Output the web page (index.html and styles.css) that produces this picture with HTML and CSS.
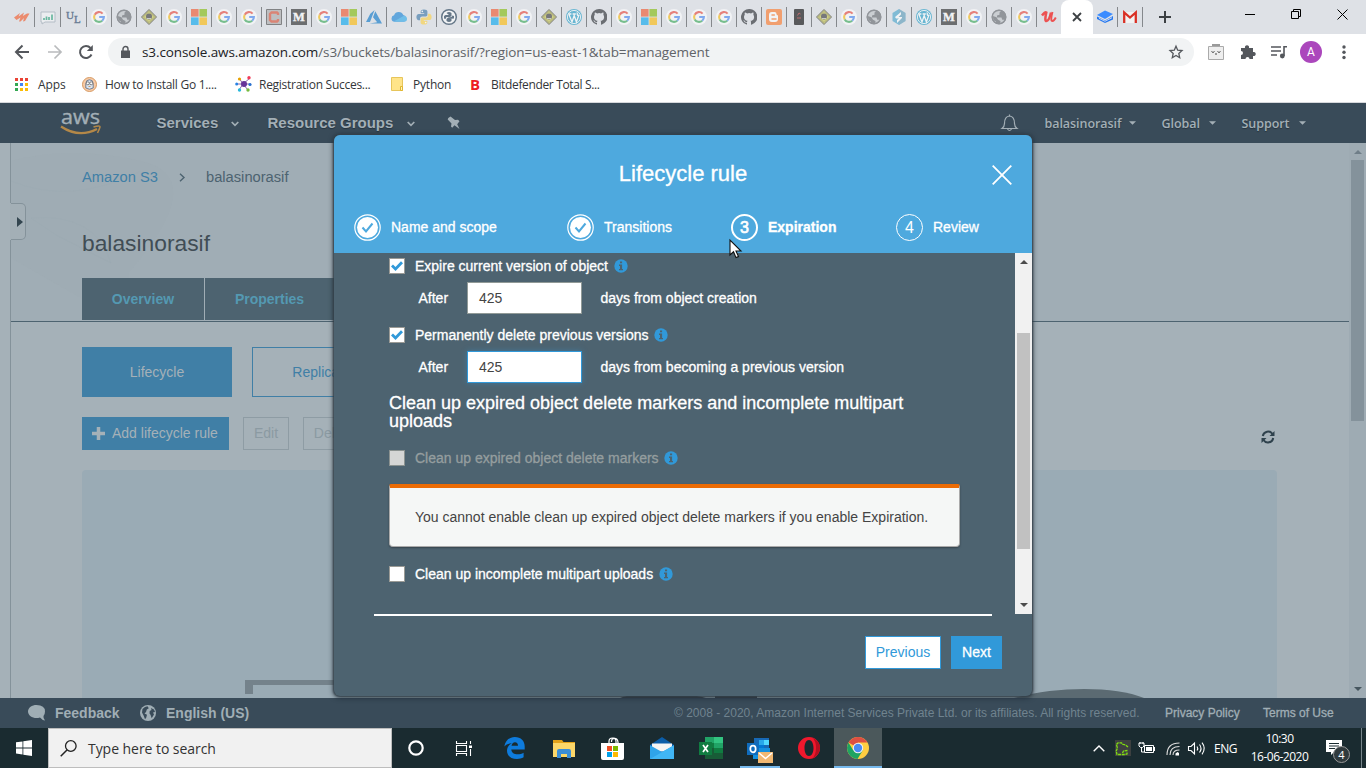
FILE: index.html
```html
<!DOCTYPE html>
<html lang="en">
<head>
<meta charset="utf-8">
<title>S3 Management Console</title>
<link rel="stylesheet" href="styles.css">
</head>
<body>
<svg class="defs" width="0" height="0">
  <symbol id="g" viewBox="0 0 16 16"><circle cx="8" cy="8" r="8" fill="#fff"/><g fill="none" stroke-width="2.1"><path d="M11.6 4.6A4.9 4.9 0 0 0 3.7 5.7" stroke="#ea4335"/><path d="M3.7 5.7a4.9 4.9 0 0 0 0 4.7" stroke="#fbbc05"/><path d="M3.7 10.4a4.9 4.9 0 0 0 7.5 1.3" stroke="#34a853"/><path d="M11.2 11.7A4.9 4.9 0 0 0 12.9 8H8.2" stroke="#4285f4"/></g></symbol>
  <symbol id="globe" viewBox="0 0 16 16"><circle cx="8" cy="8" r="7.3" fill="#5f6368"/><path d="M6.300 1.500Q9 1 10.300 2L8.500 3.500v2.300L6 6.500v2h4.500l.7 2.300h2.600q-1.300 3-4.600 3.700L9.500 12 7 10.800 5.500 8.300 1.800 7Q2 10 3 11.500L5 12.500v1.500Q1 12 .9 8 1 4.500 3.200 2.600z" fill="#dee1e6" opacity=".75"/><circle cx="8" cy="8" r="6.8" fill="none" stroke="#5f6368" stroke-width="1.400"/></symbol>
  <symbol id="diamond" viewBox="0 0 16 16"><path d="M8 .5 15.5 8 8 15.500.5 8z" fill="#c9c748" stroke="#333" stroke-width="1"/><path d="M8 2.400 13.600 8 8 13.600 2.400 8z" fill="none" stroke="#6c6b28" stroke-width=".7"/><circle cx="8" cy="7.400" r="3" fill="#333"/><path d="M6 9.500h4" stroke="#bbb"/></symbol>
  <symbol id="ms" viewBox="0 0 16 16"><path fill="#f25022" d="M0 0h7.6v7.6H0z"/><path fill="#7fba00" d="M8.4 0H16v7.6H8.4z"/><path fill="#00a4ef" d="M0 8.4h7.6V16H0z"/><path fill="#ffb900" d="M8.4 8.4H16V16H8.4z"/></symbol>
  <symbol id="medium" viewBox="0 0 16 16"><path d="M0 0h16v16H0z" fill="#222"/><text x="8" y="12.200" text-anchor="middle" class="serif" font-size="12.500" font-weight="700" fill="#fff" stroke="#fff" stroke-width=".4">M</text></symbol>
  <symbol id="wp" viewBox="0 0 16 16"><circle cx="8" cy="8" r="8" fill="#1e9bc6"/><circle cx="8" cy="8" r="6.600" fill="none" stroke="#fff" stroke-width=".9"/><path d="M2.800 5.100 6 13 8.200 6.600 10.400 13 13 5.800M2.400 5h3M6.600 5h3.200M11.200 3.500q-.5 2 1.400 4" fill="none" stroke="#fff" stroke-width="1.300"/></symbol>
  <symbol id="gh" viewBox="0 0 16 16"><path fill="#1f2328" d="M8 0a8 8 0 0 0-2.500 15.600c.4.1.5-.2.5-.4v-1.500c-2 .4-2.600-.9-2.800-1.100-.5-1-1-1.200-.6-1.300.8 0 1.300 1 1.600 1.200.6.8 1.500.6 1.900.4 0-.6.3-1 .5-1.100-1.800-.2-3.600-.9-3.600-4 0-.9.3-1.600.8-2.100-.1-.2-.4-1 .1-2.100 0 0 .7-.2 2.200.8a7.500 7.500 0 0 1 4 0c1.500-1 2.200-.8 2.200-.8.4 1.100.1 1.900 0 2.100.5.6.8 1.300.8 2.200 0 3-1.900 3.700-3.600 3.900.3.200.5.7.5 1.500v2c0 .2.1.5.5.4A8 8 0 0 0 8 0z"/></symbol>
  <symbol id="snake" viewBox="0 0 16 16"><path d="M8 .4C5.200.4 4.700 1.500 4.700 2.600v1.700h3.500v.6H2.800C1.200 4.900.4 6.200.4 8.100s1 3.200 2.200 3.200h1.500V9.500c0-1.100.9-2 2-2h3.700c1 0 1.600-.8 1.600-1.700V2.600C11.400 1.200 10.200.4 8 .4z" fill="#3573a5"/><path d="M8 15.600c2.800 0 3.300-1.100 3.300-2.200v-1.700H7.800v-.6h5.400c1.600 0 2.400-1.300 2.400-3.200s-1-3.200-2.200-3.200h-1.500v1.800c0 1.100-.9 2-2 2H6.200c-1 0-1.600.8-1.600 1.700v3.200c0 1.400 1.200 2.200 3.400 2.200z" fill="#ffd23f"/><circle cx="6.300" cy="2.400" r=".8" fill="#fff"/><circle cx="9.700" cy="13.600" r=".8" fill="#fff"/></symbol>
  <symbol id="info" viewBox="0 0 14 14"><circle cx="7" cy="7" r="6.700" fill="#3199d9"/><path d="M6 2.500h2.100v1.800H6zM5 5.500h3.100v4.400H9v1.400H5V9.900h1V6.900H5z" fill="#4d6370"/></symbol>
  <symbol id="chev" viewBox="0 0 8 6"><path d="M.7 1 4 4.300 7.300 1" fill="none" stroke="currentColor" stroke-width="1.700"/></symbol>
  <symbol id="up" viewBox="0 0 8 4"><path d="M0 4 4 0l4 4z" fill="currentColor"/></symbol>
  <symbol id="down" viewBox="0 0 8 4"><path d="M0 0h8L4 4z" fill="currentColor"/></symbol>
</svg>

<div class="tabs">
  <i class="tab t25"><svg viewBox="0 0 16 16"><path d="m0 8.500 6-4.500-1.500 3.500L10 3.500 8.800 7 13 4.500h2.500L11 12l-2 .5 1-3.500-3.500 3.500H5l1.500-4-4 2.500z" fill="#f4511e"/></svg></i>
  <i class="tab t26"><svg viewBox="0 0 16 16"><path d="M1 3h14v10H5l-3 2v-2H1z" fill="#f4f6f7" stroke="#9aa7b3"/><path d="M4 9v2M6.500 7.500V11M9 8v3M12 5.500V11" stroke="#1a9c70" stroke-width="1.700"/></svg></i>
  <i class="tab t26"><svg viewBox="0 0 16 16"><text x="0" y="10" class="serif" font-size="11" fill="#18385d" stroke="#18385d" stroke-width=".4">U</text><text x="8" y="13.500" class="serif" font-size="11" fill="#18385d" stroke="#18385d" stroke-width=".4">L</text></svg></i>
  <i class="tab"><svg><use href="#g"/></svg></i>
  <i class="tab"><svg><use href="#globe"/></svg></i>
  <i class="tab"><svg><use href="#diamond"/></svg></i>
  <i class="tab"><svg><use href="#g"/></svg></i>
  <i class="tab"><svg><use href="#ms"/></svg></i>
  <i class="tab"><svg><use href="#g"/></svg></i>
  <i class="tab"><svg><use href="#g"/></svg></i>
  <i class="tab"><svg viewBox="0 0 16 16"><path d="M.5.500h15v15H.5z" fill="#aaa" stroke="#444"/><path d="M12 6V4.500L11 3.500H5.500L4 5v6l1.500 1.500H11l1-1V10" fill="none" stroke="#d9482b" stroke-width="2.400"/></svg></i>
  <i class="tab"><svg><use href="#medium"/></svg></i>
  <i class="tab"><svg><use href="#g"/></svg></i>
  <i class="tab"><svg><use href="#ms"/></svg></i>
  <i class="tab"><svg viewBox="0 0 16 16"><path d="M8.600 1 4.300 4.700 0 13h4zM9.300 2.200 7 8.300l4.200 5L3.500 14.600H16z" fill="#0072c6"/></svg></i>
  <i class="tab"><svg viewBox="0 0 16 16"><path d="M3.500 12.800a3.300 3.300 0 0 1-.4-6.500A5 5 0 0 1 12.300 6a3.500 3.500 0 0 1 .4 6.800z" fill="#0f7fd6"/><path d="M2.700 12.600 13 6.800q3 .6 3 3.200t-3 2.800z" fill="#28a8ea"/></svg></i>
  <i class="tab"><svg><use href="#snake"/></svg></i>
  <i class="tab"><svg viewBox="0 0 16 16"><circle cx="8" cy="8" r="7.300" fill="#fff" stroke="#16324b" stroke-width="1.500"/><path d="M5.500 4q2.500-2 5 0v3L9 8H5.500L4.500 10 3 9.500V7l1.500-1H8zM5.500 12q2.500 2 5 0v-2H8l5-.5V7l-1.500-.5L10.500 8 7 8.600 5.500 10z" fill="#16324b"/></svg></i>
  <i class="tab"><svg><use href="#g"/></svg></i>
  <i class="tab"><svg><use href="#ms"/></svg></i>
  <i class="tab"><svg><use href="#g"/></svg></i>
  <i class="tab"><svg><use href="#diamond"/></svg></i>
  <i class="tab"><svg><use href="#wp"/></svg></i>
  <i class="tab"><svg><use href="#gh"/></svg></i>
  <i class="tab"><svg><use href="#g"/></svg></i>
  <i class="tab"><svg><use href="#ms"/></svg></i>
  <i class="tab"><svg><use href="#g"/></svg></i>
  <i class="tab"><svg><use href="#g"/></svg></i>
  <i class="tab"><svg><use href="#g"/></svg></i>
  <i class="tab"><svg><use href="#gh"/></svg></i>
  <i class="tab"><svg viewBox="0 0 16 16"><rect width="16" height="16" rx="2" fill="#ff7421"/><path d="M5.800 3h2.700q2 0 2.200 2.400l.3.800h1V10q0 3-3 3H5.800Q3 13 3 10V6q0-3 2.800-3z" fill="#fff"/><path d="M6 6h2.300M6 10h4" stroke="#ff7421" stroke-width="1.500" stroke-linecap="round"/></svg></i>
  <i class="tab"><svg viewBox="0 0 16 16"><rect x="3" width="10" height="16" rx="1" fill="#000"/><path d="M6.500 6.500 8 4l1.500 1M6 9h4" stroke="#a22" fill="none"/></svg></i>
  <i class="tab"><svg><use href="#diamond"/></svg></i>
  <i class="tab"><svg><use href="#g"/></svg></i>
  <i class="tab"><svg><use href="#globe"/></svg></i>
  <i class="tab"><svg viewBox="0 0 16 16"><path d="m8 0 6.500 4v8L8 16l-6.500-4V4z" fill="#42a2cb"/><path d="m8 0 6.500 4v8L8 16z" fill="#6f93a8" opacity=".5"/><path d="m4 8 6-5v2.500L7.500 8H11v1l-5 5v-3l2-1.500H5z" fill="#fff"/></svg></i>
  <i class="tab"><svg><use href="#wp"/></svg></i>
  <i class="tab"><svg><use href="#medium"/></svg></i>
  <i class="tab"><svg><use href="#g"/></svg></i>
  <i class="tab"><svg><use href="#globe"/></svg></i>
  <i class="tab"><svg><use href="#g"/></svg></i>
  <i class="tab last bright"><svg viewBox="0 0 16 16"><path d="M1 6.500q3-4 4.300-3-2 8.500.2 8.500Q8 12 10 3.500" fill="none" stroke="#ec5252" stroke-width="2.500"/><path d="M11.500 3Q9 12 11.500 12q1.500 0 3.300-3.500" fill="none" stroke="#ec5252" stroke-width="1.900"/></svg></i>
  <i class="tab-active"><svg width="10" height="10" viewBox="0 0 10 10"><path d="m1 1 8 8M9 1 1 9" stroke="#3c4043" stroke-width="1.800"/></svg></i>
  <i class="tab bright"><svg viewBox="0 0 16 16"><path d="m0 6 8-4.500L16 5l-8 5z" fill="#3b8cff"/><path d="m0 7.500 8 4L16 7v3.500L8 14l-8-4z" fill="#2879ef"/><path d="m2 9.300 6 3 7-3.600" fill="none" stroke="#dfe9f7" stroke-width=".8"/></svg></i>
  <i class="tab bright"><svg viewBox="0 0 16 16"><path d="M1 3h14v11H1z" fill="#f2f2f2"/><path d="M2.200 14V3.500L8 8.500l5.800-5V14" fill="none" stroke="#d93025" stroke-width="2.300"/></svg></i>
  <svg class="newtab" width="12" height="12" viewBox="0 0 12 12"><path d="M6 0v12M0 6h12" stroke="#3c4043" stroke-width="2"/></svg>
  <span class="wincontrols">
    <svg width="10" height="10"><path d="M0 5.500h10" stroke="#000"/></svg>
    <svg width="10" height="10"><path d="M.5 2.500h7v7h-7zM2.500 2.500v-2h7v7h-2" fill="none" stroke="#000"/></svg>
    <svg width="11" height="11"><path d="m.5.500 10 10m0-10-10 10" stroke="#000"/></svg>
  </span>
</div>

<div class="toolbar">
  <svg class="back" width="16" height="16" viewBox="0 0 16 16"><path d="M15 8H2M8.500 1.500 2 8l6.500 6.500" fill="none" stroke="#54575c" stroke-width="2"/></svg>
  <svg class="fwd" width="16" height="16" viewBox="0 0 16 16"><path d="M1 8h13M7.500 1.500 14 8l-6.500 6.500" fill="none" stroke="#b9bbbd" stroke-width="1.700"/></svg>
  <svg class="reload" width="16" height="16" viewBox="0 0 16 16"><path d="M13.500 10.500A6 6 0 1 1 12.500 4" fill="none" stroke="#54575c" stroke-width="2"/><path d="M14.800 1v6h-6z" fill="#54575c"/></svg>
  <div class="omnibox">
    <svg width="9" height="12" viewBox="0 0 9 12"><path d="M0 4.500h9V12H0z" fill="#54575c"/><path d="M2 5V3a2.500 2.500 0 0 1 5 0v2" fill="none" stroke="#54575c" stroke-width="1.400"/></svg>
    <span class="url">s3.console.aws.amazon.com<span>/s3/buckets/balasinorasif/?region=us-east-1&amp;tab=management</span></span>
    <svg class="star" width="14" height="14" viewBox="0 0 14 14"><path d="m7 1.200 1.700 4 4.300.4-3.200 2.900.9 4.200L7 10.500l-3.700 2.200.9-4.200L1 5.600l4.300-.4z" fill="none" stroke="#54575c" stroke-width="1.300"/></svg>
  </div>
  <svg class="ext" width="16" height="16" viewBox="0 0 16 16"><path d="M4 0h8v2H4z" fill="#9a9a9a"/><path d="M.5 2.500h15v13H.5z" fill="#eee" stroke="#aaa"/><path d="M3.500 7.500 5 8.500l1.500-1M9.500 7.500l1.500 1 1.500-1M7 10h2" fill="none" stroke="#444"/></svg>
  <svg class="puzzle" width="16" height="16" viewBox="0 0 16 16"><path d="M1 4h4a2.100 2.100 0 1 1 4 0h4v4a2.100 2.100 0 1 1 0 4v3H9.500a2 2 0 0 0-4 0H1v-4a2 2 0 0 0 0-4z" fill="#54575c"/></svg>
  <svg class="queue" width="16" height="14" viewBox="0 0 16 14"><path d="M0 2h10M0 6h10M0 10h6" stroke="#54575c" stroke-width="1.600"/><path d="M13 11V1.800h3" fill="none" stroke="#54575c" stroke-width="1.600"/><circle cx="11.300" cy="11" r="2.400" fill="#54575c"/></svg>
  <span class="avatar">A</span>
  <svg class="kebab" width="4" height="16"><circle cx="2" cy="3" r="1.700"/><circle cx="2" cy="8.300" r="1.700"/><circle cx="2" cy="13.500" r="1.700"/></svg>
</div>

<div class="bookmarks">
  <span class="bm b1"><svg width="13" height="13" viewBox="0 0 13 13"><path fill="#ea4335" d="M0 0h3v3H0zM5 0h3v3H5zM10 0h3v3h-3z"/><path fill="#34a853" d="M0 5h3v3H0zM0 10h3v3H0z"/><path fill="#4285f4" d="M5 5h3v3H5z"/><path fill="#fbbc05" d="M10 5h3v3h-3zM5 10h3v3H5zM10 10h3v3h-3z"/></svg>Apps</span>
  <span class="bm b2"><svg width="15" height="15" viewBox="0 0 15 15"><circle cx="7.500" cy="7.500" r="7" fill="#f8cba6" stroke="#d79a63"/><path d="M3.800 11V6.500q0-3.700 3.700-3.700t3.700 3.700V11q-3.700 2.500-7.400 0z" fill="#dbe5f0" stroke="#5b6880" stroke-width=".8"/><circle cx="5.800" cy="6.300" r="1.500" fill="#fff" stroke="#555" stroke-width=".7"/><circle cx="9.200" cy="6.300" r="1.500" fill="#fff" stroke="#555" stroke-width=".7"/><path d="M6.500 9.500h2" stroke="#c96"/></svg>How to Install Go 1....</span>
  <span class="bm b3"><svg width="17" height="16" viewBox="0 0 17 16"><path d="m8 8-4-6M8 8l7-6M8 8H1M8 8h8M8 8l-4 6M8 8l5 6" stroke="#86a"/><circle cx="9" cy="8" r="3" fill="#663399"/><circle cx="4.500" cy="3" r="1.600" fill="#e8a200"/><circle cx="14" cy="1.700" r="1.700" fill="#f23b57"/><circle cx="1.700" cy="8" r="1.500" fill="#2782e3"/><circle cx="15" cy="8.500" r="1.600" fill="#2a73d1"/><circle cx="4.500" cy="14" r="1.700" fill="#28b8db"/><circle cx="13" cy="14" r="1.700" fill="#75ba3e"/></svg>Registration Succes...</span>
  <span class="bm b4"><svg width="12" height="14" viewBox="0 0 12 14"><path d="M.5.500h11v13H.5z" fill="#ffe489" stroke="#e7c55b"/><path d="M9.500 9.500h2v4h-2z" fill="#fff2bd" stroke="#e0b62f"/></svg>Python</span>
  <span class="bm b5"><b>B</b>Bitdefender Total S...</span>
</div>

<div class="console">
  <div class="nav">
    <svg class="aws" width="42" height="28" viewBox="0 0 42 28"><text x="1" y="15" textLength="39" lengthAdjust="spacingAndGlyphs" font-size="20" fill="#a3afb6" class="awsword">aws</text><path d="M1 17.500q18 12 36 2.500" fill="none" stroke="#b48848" stroke-width="2.300"/><path d="M33.500 18q7-2 6.500 0t-2.500 6" fill="none" stroke="#b48848" stroke-width="1.500"/></svg>
    <span class="n1">Services</span><svg class="cv c1" width="8" height="6"><use href="#chev"/></svg>
    <span class="n2">Resource Groups</span><svg class="cv c2" width="8" height="6"><use href="#chev"/></svg>
    <svg class="pin" width="14" height="14" viewBox="0 0 14 14"><path d="M3.500.5 8 4l3-.3 1.500 1.500-2.300 3L12.500 13l-5-3.700-2.300 2.500L4 10.500l.5-3L.7 3.500l.6-1.500z" fill="#a3afb6"/></svg>
    <svg class="bell" width="17" height="18" viewBox="0 0 17 18"><path d="M1 14.500q2.500-2 2.500-5 0-7 5-7.500 5 .5 5 7.500 0 3 2.500 5zM8.500 2V.5M6.500 15q2 3 4 0" fill="none" stroke="#a3afb6" stroke-width="1.200"/></svg>
    <span class="acct a1">balasinorasif</span><svg class="dn" width="7" height="4"><use href="#down"/></svg>
    <span class="acct a2">Global</span><svg class="dn" width="7" height="4"><use href="#down"/></svg>
    <span class="acct a3">Support</span><svg class="dn" width="7" height="4"><use href="#down"/></svg>
  </div>

  <div class="page">
    <div class="rail"><span class="handle"><svg width="6" height="10"><path d="M0 0 6 5 0 10z" fill="#33454f"/></svg></span></div>
    <div class="main">
      <div class="top">
        <svg class="ghost" width="260" height="178" viewBox="0 0 260 178"><path d="M0 18Q60 2 130 18T118 130L110 178 0 115z" fill="#9caab1" opacity=".15"/><path d="M0 38q60 25 130-10M20 75q65-5 80 45L45 92z" fill="none" stroke="#97a6ae" opacity=".25"/></svg>
        <div class="crumbs"><a>Amazon S3</a><svg width="6" height="9"><path d="m1 .8 4 3.700-4 3.700" fill="none" stroke="#4d6370" stroke-width="1.400"/></svg><span>balasinorasif</span></div>
        <h1>balasinorasif</h1>
        <div class="maintabs"><span class="mt1">Overview</span><span class="mt2">Properties</span></div>
      </div>
      <div class="subtabs"><span class="st on">Lifecycle</span><span class="st">Replication</span></div>
      <div class="actions">
        <span class="add"><svg width="13" height="13"><path d="M6.500 0v13M0 6.500h13" stroke="#a5b1b8" stroke-width="3.500"/></svg>Add lifecycle rule</span>
        <span class="ghostbtn">Edit</span><span class="ghostbtn">Delete</span>
        <svg class="refresh" width="14" height="14" viewBox="0 0 14 14"><path d="M1.800 6A5.300 5.300 0 0 1 11.500 4M12.200 8A5.300 5.300 0 0 1 2.500 10" fill="none" stroke="#2f424d" stroke-width="2"/><path d="M13.500 1v5h-5zM.5 13V8h5z" fill="#2f424d"/></svg>
      </div>
      <div class="panel">
        <span class="frame"></span>
        <svg class="hump" width="860" height="9"><path d="M275 9q6-3 20-3h38q20 0 28 3zM370 7h42v2h-42z" fill="#3a444a"/><path d="M669 9C712-3 770-3 799 9z" fill="#5b6a72"/></svg>
      </div>
    </div>
    <div class="pagescroll"><svg width="8" height="4"><use href="#up"/></svg><i></i><svg class="end" width="8" height="4"><use href="#down"/></svg></div>
  </div>

  <div class="foot">
    <svg class="bubble" width="18" height="16" viewBox="0 0 18 16"><path d="M8.500 0C4 0 0 2.700 0 6.500S4 13 8.500 13q1.500 0 3.500-.5 2 2.500 5 3-2-2-1.500-4.500Q17 9 17 6.500 17 0 8.500 0z" fill="#a0aeb5"/></svg>
    <b class="fb">Feedback</b>
    <svg class="world" width="16" height="16" viewBox="0 0 16 16"><circle cx="8" cy="8" r="8" fill="#a0aeb5"/><path d="M2.500 4q2.500-2.800 5-2.800l1.300 2-2 1.300L6 7 4.500 8.500 7 9.800l-.8 3-1.200 1.500-1.300-3.500L2 7.500zM11 3l3 1.500 1 2.500-2 .5 1 2-2.300 3.700-1.200-3.500L9.500 8.500 9.700 6l1.800-1z" fill="#394b59"/></svg>
    <b class="lang">English (US)</b>
    <span class="copy">© 2008 - 2020, Amazon Internet Services Private Ltd. or its affiliates. All rights reserved.</span>
    <span class="pp">Privacy Policy</span><span class="tu">Terms of Use</span>
  </div>

  <div class="modal">
    <div class="mhead">
      <div class="mtitle">Lifecycle rule<svg class="close" width="20" height="20"><path d="m.7.700 18.600 18.600m0-18.600L.7 19.300" stroke="#fff" stroke-width="1.800"/></svg></div>
      <div class="steps">
        <span class="step s1"><i><svg width="27" height="27"><circle cx="13.500" cy="13.500" r="12.700" fill="none" stroke="#fff" stroke-width="1.200"/><circle cx="13.500" cy="13.500" r="10.500" fill="#fff"/><path d="m8.500 13.500 3.500 4 6.500-8" fill="none" stroke="#4ea9de" stroke-width="2"/></svg></i>Name and scope</span>
        <span class="step s2"><i><svg width="27" height="27"><circle cx="13.500" cy="13.500" r="12.700" fill="none" stroke="#fff" stroke-width="1.200"/><circle cx="13.500" cy="13.500" r="10.500" fill="#fff"/><path d="m8.500 13.500 3.500 4 6.500-8" fill="none" stroke="#4ea9de" stroke-width="2"/></svg></i>Transitions</span>
        <span class="step s3"><i class="num">3</i>Expiration</span>
        <span class="step s4"><i class="num">4</i>Review</span>
      </div>
    </div>
    <div class="mbody">
      <div class="form">
        <div class="check r1"><i><svg width="12" height="10"><path d="m1 4.500 3.500 3.500L11 1.300" fill="none" stroke="#3199d9" stroke-width="2.800"/></svg></i>Expire current version of object<svg class="info"><use href="#info"/></svg></div>
        <div class="after"><span>After</span><b>425</b>days from object creation</div>
        <div class="check r2"><i><svg width="12" height="10"><path d="m1 4.500 3.500 3.500L11 1.300" fill="none" stroke="#3199d9" stroke-width="2.800"/></svg></i>Permanently delete previous versions<svg class="info"><use href="#info"/></svg></div>
        <div class="after focus"><span>After</span><b>425</b>days from becoming a previous version</div>
        <h2>Clean up expired object delete markers and incomplete multipart uploads</h2>
        <div class="check off"><i></i>Clean up expired object delete markers<svg class="info"><use href="#info"/></svg></div>
        <div class="alert">You cannot enable clean up expired object delete markers if you enable Expiration.</div>
        <div class="check"><i></i>Clean up incomplete multipart uploads<svg class="info"><use href="#info"/></svg></div>
      </div>
      <div class="mscroll"><svg width="8" height="4"><use href="#up"/></svg><i></i><svg class="end" width="8" height="4"><use href="#down"/></svg></div>
    </div>
    <div class="mfoot"><span class="prev">Previous</span><span class="next">Next</span></div>
  </div>
  <svg class="cursor" width="13" height="20" viewBox="0 0 13 20"><path d="M1 1v15l3.500-3.200L7 18.600l2.500-1-2.500-5.600h5z" fill="#fff" stroke="#111" stroke-width="1.100"/></svg>
</div>

<div class="taskbar">
  <span class="start"><svg width="16" height="16" viewBox="0 0 16 16"><path d="m0 2.300 6.500-.9v6.100H0zM7.300 1.300 16 0v7.500H7.300zM0 8.400h6.500v6.100L0 13.600zM7.300 8.400H16V16l-8.700-1.300z" fill="#fff"/></svg></span>
  <span class="search"><svg width="17" height="17" viewBox="0 0 17 17"><circle cx="10.800" cy="6" r="5.300" fill="none" stroke="#222" stroke-width="1.300"/><path d="M7 10 .7 16.300" stroke="#222" stroke-width="1.500"/></svg>Type here to search</span>
  <span class="cell"><svg width="16" height="16"><circle cx="8" cy="8" r="6.700" fill="none" stroke="#fff" stroke-width="2.200"/></svg></span>
  <span class="cell tv"><svg width="16" height="15" viewBox="0 0 16 15"><path d="M.5 0v2.500h10V0M.5 15v-2.500h10V15M.5 4.500h10v6H.5zM14.500 0v3M14.500 8v7" fill="none" stroke="#fff" stroke-width="1.100"/><path d="M13 4.500h3v2.500h-3z" fill="#fff"/></svg></span>
  <span class="app"><svg width="21" height="22" viewBox="0 0 21 22"><path d="M.3 9.500C1.500 3.500 5.500 0 10.800 0 17 0 20.700 4 20.700 9.500v3H7.300c.3 3.500 3 4.800 6.300 4.800 2.300 0 4.300-.6 6-1.600v4.600C17.700 21.500 15.500 22 13 22 7 22 3 18.700 3 13.800c0-3.300 1.700-6 4.800-7.600C4.500 6.300 2 7.500.3 9.500zM7.500 8.800H14C14 6.500 12.900 5.200 11 5.200S8 6.500 7.500 8.800z" fill="#0e7bdc" fill-rule="evenodd"/></svg></span>
  <span class="app"><svg width="22" height="19" viewBox="0 0 22 19"><path d="M0 1h9l1.500 2H22v15H0z" fill="#e3a21a"/><path d="M0 4h22v14H0z" fill="#fcd769"/><path d="M4 19v-7q0-2 2-2h10q2 0 2 2v7h-4v-4H8v4z" fill="#3b8ed6"/></svg></span>
  <span class="app"><svg width="23" height="23" viewBox="0 0 23 23"><path d="M8 7V4.500q0-3.500 3.500-3.500T15 4.500V7M10.500 5q0-3.700 3-3.700T17 5v2" fill="none" stroke="#fff" stroke-width="1.200"/><path d="M0 6h23v15q0 2-2 2H2q-2 0-2-2z" fill="#fff"/><path d="M6 9h5v5H6z" fill="#f04e23"/><path d="M12 9h5v5h-5z" fill="#7cb900"/><path d="M6 15h5v5H6z" fill="#01a0e9"/><path d="M12 15h5v5h-5z" fill="#fdb900"/></svg></span>
  <span class="app"><svg width="24" height="22" viewBox="0 0 24 22"><path d="M0 8 12 0l12 8v14H0z" fill="#0b5da8"/><path d="M2 6.500h20v8H2z" fill="#f4f4f4"/><path d="M0 8.200 12 15l12-6.800V22H0z" fill="#2fa4ea"/><path d="M0 22 24 8.200V22z" fill="#41b6f5"/></svg></span>
  <span class="app"><svg width="24" height="22" viewBox="0 0 24 22"><path d="M6 0h18v22H6z" fill="#21a366"/><path d="M15 0h9v6h-9z" fill="#33c481"/><path d="M6 6h9v5H6z" fill="#107c41"/><path d="M15 11h9v5h-9z" fill="#107c41"/><path d="M6 11h9v11H6z" fill="#185c37"/><path d="M15 16h9v6h-9z" fill="#185c37"/><rect y="5" width="13" height="13" fill="#107c41"/><path d="m4 8 5 7M9 8l-5 7" stroke="#fff" stroke-width="1.700"/></svg></span>
  <span class="app open"><svg width="26" height="25" viewBox="0 0 26 25"><path d="M7 0h15v14H7z" fill="#1769b5"/><path d="M12 2h5v5h-5z" fill="#28a8ea"/><path d="M17 2h5v5h-5z" fill="#50d9ff"/><path d="M12 7h5v5h-5z" fill="#0078d4"/><path d="M6 10h17v11H6z" fill="#1490df"/><rect y="5" width="12" height="12" fill="#0f6cbd"/><ellipse cx="6" cy="11" rx="2.700" ry="3.300" fill="none" stroke="#fff" stroke-width="1.700"/><path d="M11 14h15v11H11z" fill="#f0b873"/><path d="m12 15 6.500 5.500L25 15" fill="none" stroke="#fff" stroke-width="1.500"/></svg></span>
  <span class="app"><svg width="22" height="22" viewBox="0 0 22 22"><path fill-rule="evenodd" d="M11 0a11 11 0 1 1 0 22 11 11 0 0 1 0-22zm0 3C8.300 3 6.500 6.300 6.500 11s1.800 8 4.500 8 4.500-3.300 4.500-8S13.700 3 11 3z" fill="#f0182d"/><path d="M14 .5Q22 4 22 11t-8 10.500q4-3 4-10.500T14 .5z" fill="#b50f20"/></svg></span>
  <span class="app current"><svg width="22" height="22" viewBox="0 0 22 22"><circle cx="11" cy="11" r="11" fill="#ffcd41"/><path d="M11 11 1.500 5.500A11 11 0 0 1 20.500 5.500H11z" fill="#dd4f43"/><path d="M1.500 5.500A11 11 0 0 0 10.500 22L15.700 13.500 11 11 6 13z" fill="#1ea362"/><circle cx="11" cy="11" r="5.200" fill="#f3f3f3"/><circle cx="11" cy="11" r="4.200" fill="#4a8af4"/></svg></span>
  <div class="tray">
    <svg width="12" height="7"><path d="m.7 6.300 5.300-5.300 5.300 5.300" fill="none" stroke="#fff" stroke-width="1.400"/></svg>
    <svg class="nv" width="16" height="16"><path d="M0 0h16v16H0z" fill="#3d4040"/><path d="M1.500 4.500 3 2.800h3.500l1 1.500 3 .7 2.500 2M1.500 5l1 3-1.300 3 .8 3.500h8l2-.5v-1.500M12.500 10.500 8.500 11l-1 2" fill="none" stroke="#80e010" stroke-width="1.300" stroke-dasharray="3 .7"/></svg>
    <svg class="bat" width="16" height="12" viewBox="0 0 16 12"><path d="M0 1h5v3l-1.500 1.500h-2L0 4zM1 0v2M4 0v2M2.500 5v5H5" fill="none" stroke="#fff"/><path d="M5.500 3.500h9v7h-9z" fill="none" stroke="#fff"/><path d="M7 5h6v4H7zM15 5h1v4h-1z" fill="#fff"/></svg>
    <svg class="wifi" width="14" height="14" viewBox="0 0 14 14"><path d="M1 13Q1 1 13.500 1M4 13Q4 4.500 13.500 4.500M7 13Q7 8 13.500 8" fill="none" stroke="#ddd" stroke-width="1.100"/><path d="M9.500 13.500v-2l2-1.500 1.500 1v2.500z" fill="#fff"/></svg>
    <svg class="vol" width="17" height="13" viewBox="0 0 17 13"><path d="M.5 4.500H3L6.500 1v11L3 8.500H.5zM9 4.500q1.500 2 0 4M11.500 2.500q3 4 0 8M14 .7q4.500 5.800 0 11.600" fill="none" stroke="#fff" stroke-width="1.100"/></svg>
    <span class="eng">ENG</span>
    <span class="clock"><span>10:30</span><span class="date">16-06-2020</span></span>
    <span class="notif"><svg width="16" height="15"><path d="M0 0h16v12H8l-3 3v-3H0z" fill="#fff"/><path d="M3 3.500h10M3 6h10M3 8.500h6" stroke="#1a2b30"/></svg><i>4</i></span>
    <span class="edge"></span>
  </div>
</div>
</body>
</html>
```
FILE: styles.css
```css
* { box-sizing: border-box; }
body {
  margin: 0; width: 1366px; height: 768px; overflow: hidden;
  font-family: "Liberation Sans", Arial, sans-serif; font-size: 14px;
  display: flex; flex-direction: column; background: #fff;
}
svg { display: block; flex: none; overflow: visible; }
i { font-style: normal; }
.defs { position: absolute; }
.serif { font-family: "Liberation Serif", serif; }

/* Browser tabs */
.tabs { height: 34px; flex: none; background: #dee1e6; display: flex; align-items: center; padding-left: 10px; }
.tab { width: 25px; height: 20px; flex: none; border-right: 1px solid #85888c; display: flex; align-items: center; justify-content: center; }
.tab svg { width: 16px; height: 16px; opacity: .6; }
.tab.t26 { width: 26px; }
.tab.last { border: 0; width: 24px; }
.tab.bright svg { opacity: 1; }
.tab-active { width: 32px; height: 34px; flex: none; background: #fff; border-radius: 8px 8px 0 0; display: flex; align-items: center; justify-content: center; }
.newtab { margin-left: 16px; }
.wincontrols { margin-left: auto; display: flex; gap: 36px; padding: 0 18px 6px 0; }

/* Toolbar */
.toolbar { height: 35px; flex: none; display: flex; align-items: center; padding: 1px 20px 0 14px; }
.fwd { margin-left: 17px; }
.reload { margin-left: 15px; }
.omnibox { margin-left: 14px; margin-right: 14px; width: 1086px; height: 28px; border-radius: 14px; background: #f1f3f4; display: flex; align-items: center; padding: 0 11px 0 13px; }
.url { margin-left: 12px; font: 13.5px "Open Sans", sans-serif; color: #202124; letter-spacing: -.09px; white-space: nowrap; }
.url span { color: #5f6368; }
.star { margin-left: auto; }
.puzzle { margin-left: 16px; }
.queue { margin-left: 15px; }
.avatar { width: 22px; height: 22px; flex: none; margin-left: 13px; border-radius: 50%; background: #ab47bc; color: #fff; font: 12px/22px Roboto, sans-serif; text-align: center; }
.kebab { margin-left: auto; fill: #54575c; }

/* Bookmarks */
.bookmarks { height: 34px; flex: none; border-bottom: 1px solid #d6d8dc; display: flex; align-items: center; padding: 0 0 3px 15px; font: 12px "Open Sans", sans-serif; color: #333639; letter-spacing: -.28px; }
.bm { display: flex; align-items: center; flex: none; white-space: nowrap; }
.b1 { width: 67px; gap: 10px; letter-spacing: -.1px; }
.b2 { width: 153px; gap: 8px; }
.b3 { width: 156px; gap: 7px; }
.b4 { width: 79px; gap: 10px; letter-spacing: -.2px; }
.b5 { gap: 10px; letter-spacing: -.35px; }
.b5 b { color: #ed1c24; font: 700 15px "Open Sans", sans-serif; width: 11px; }

/* AWS console */
.console { position: relative; height: 625px; flex: none; display: flex; flex-direction: column; }
.nav { height: 40px; flex: none; background: #394b59; color: #a3afb6; display: flex; align-items: center; padding-left: 60px; }
.awsword { font-family: "Open Sans", sans-serif; stroke: #a3afb6; stroke-width: .4px; }
.nav span { font-weight: 700; font-size: 15px; white-space: nowrap; text-shadow: 0 1px 1px #26343f; }
.nav .n1 { margin: -2px 0 0 54.500px; width: 62px; }
.nav .n2 { margin: -2px 0 0 29px; width: 126px; }
.cv { margin-top: 2px; }
.c1 { margin-left: 12px; }
.c2 { margin-left: 13px; }
.pin { margin-left: 32px; }
.bell { margin-left: 540px; }
.nav .acct { font: 600 12.5px "Open Sans", sans-serif; letter-spacing: -.05px; }
.nav .a1 { margin-left: 27px; width: 76px; }
.nav .a2 { margin-left: 26px; width: 39px; }
.nav .a3 { margin-left: 26px; width: 49px; }
.dn { margin-left: 8px; }

.page { flex: 1; display: flex; background: #a5b1b8; min-height: 0; }
.rail { width: 11px; flex: none; border-right: 1px solid #84929a; padding-top: 60px; }
.handle { position: relative; z-index: 1; display: flex; align-items: center; width: 15px; height: 37px; margin-left: 11px; padding-left: 6px; background: #a3afb6; border: 1px solid #84929a; border-left: 0; border-radius: 0 5px 5px 0; box-shadow: -1px 0 #a3afb6; }
.main { width: 1338px; flex: none; display: flex; flex-direction: column; }
.top { position: relative; height: 179px; flex: none; background: #a0adb5; border-bottom: 1px solid #4d6370; padding: 25px 0 0 71px; }
.ghost { position: absolute; left: 0; top: 0; }
.crumbs { position: relative; display: flex; align-items: center; height: 18px; font-size: 14.700px; color: #4d6370; }
.crumbs a { color: #407fa6; width: 97px; }
.crumbs span { margin-left: 21px; }
h1 { position: relative; margin: 43px 0 0; font-size: 22.800px; font-weight: 400; line-height: 28px; color: #414d55; }
.maintabs { position: relative; display: flex; gap: 1px; margin-top: 21px; }
.maintabs span { height: 42px; line-height: 42px; background: #4d6370; color: #5499b2; font-weight: 700; text-align: center; }
.mt1 { width: 122px; }
.mt2 { width: 129px; }
.subtabs { display: flex; gap: 20px; padding: 25px 0 0 71px; }
.st { width: 150px; height: 50px; line-height: 48px; border: 1px solid #407fa6; color: #407fa6; text-align: center; }
.st.on { background: #407fa6; color: #a5b1b8; }
.actions { display: flex; align-items: center; padding: 20px 74px 20px 71px; }
.add { width: 147px; height: 33px; background: #407fa6; color: #a5b1b8; display: flex; align-items: center; gap: 7px; padding: 0 0 1px 10px; white-space: nowrap; }
.ghostbtn { width: 46px; height: 33px; line-height: 31px; margin-left: 14px; border: 1px solid #8e9ca4; color: #8b9aa2; text-align: center; }
.ghostbtn + .ghostbtn { width: 62px; }
.refresh { margin: 6px 0 0 auto; }
.panel { margin-left: 71px; width: 1195px; height: 228px; flex: none; border-radius: 4px 4px 0 0; background: #9aabb5; display: flex; align-items: flex-end; }
.frame { width: 100px; height: 14px; flex: none; margin: 0 0 4px 163px; border: 7px solid #74828b; border-width: 5px 0 0 8px; }
.hump { margin-left: 0; }
.pagescroll { width: 17px; background: #9eabb3; color: #6f7e88; display: flex; flex-direction: column; align-items: center; padding: 7px 0; }
.pagescroll i { width: 13px; height: 261px; margin-top: 6px; background: #84929b; }
.end { margin-top: auto; }
.pagescroll .end { color: #46565f; }

.foot { height: 30px; flex: none; background: #394b59; color: #a0aeb5; display: flex; align-items: center; padding-left: 28px; white-space: nowrap; }
.fb { margin-left: 9px; width: 65px; }
.world { margin-left: 20px; }
.lang { margin-left: 10px; width: 84px; }
.copy { margin-left: 424px; width: 466px; font-size: 12px; color: #70838f; }
.pp { margin-left: 25px; width: 74px; font-size: 12px; }
.tu { margin-left: 24px; font-size: 12px; }
.pp, .tu { -webkit-text-stroke: .3px #a0aeb5; }

/* Lifecycle dialog */
.modal { position: absolute; left: 334px; top: 32px; width: 698px; height: 561px; border-radius: 6px; background: #4d6370; color: #fff; overflow: hidden; display: flex; flex-direction: column; box-shadow: 0 0 2px 1px #35424b, 0 1px 5px 1px rgba(20,30,40,.6); -webkit-text-stroke: .3px currentColor; }
.mhead { height: 118px; flex: none; background: #4ea9de; }
.mtitle { position: relative; height: 77px; line-height: 77px; text-align: center; font-size: 22px; }
.close { position: absolute; right: 20px; top: 30px; }
.steps { display: flex; padding-left: 20px; height: 30px; align-items: center; }
.step { display: flex; align-items: center; gap: 10px; flex: none; white-space: nowrap; }
.s1 { width: 213px; }
.s2 { width: 164px; }
.s3 { width: 165px; font-weight: 700; }
.num { width: 27px; height: 27px; border: 2px solid #fff; border-radius: 50%; text-align: center; font-size: 16px; line-height: 24px; font-weight: 400; -webkit-text-stroke: .7px #fff; }
.s4 .num { border-width: 1px; line-height: 26px; -webkit-text-stroke: 0; }
.mbody { height: 361px; flex: none; display: flex; }
.form { width: 681px; padding-left: 55px; }
.check { display: flex; align-items: center; height: 26px; }
.check i { width: 16px; height: 16px; background: #fff; border: 1px solid #9b9b96; margin-right: 10px; display: flex; align-items: center; justify-content: center; }
.info { width: 14px; height: 14px; margin-left: 6px; }
.after { display: flex; align-items: center; margin-top: 3px; height: 32px; padding-left: 29.500px; }
.after span { width: 48.500px; }
.after b { width: 115px; height: 32px; margin-right: 18.500px; padding-left: 11px; line-height: 31px; background: #fff; color: #444; font-weight: 400; border: 1px solid #919a97; -webkit-text-stroke: 0; }
.focus b { border-color: #3199d9; box-shadow: 0 0 6px #3199d966; }
.r2 { margin-top: 8px; }
h2 { margin: 11px 0 15px; width: 540px; font-size: 18px; line-height: 18px; font-weight: 400; }
.off { color: #959e9f; }
.off .info { margin-left: 5px; }
.off i { background: #d5d6d5; border-color: #8b9290; }
.alert { width: 571px; height: 63px; margin: 13px 0 14px; padding: 19px 0 0 25px; line-height: 20px; border: 1px solid #aaa; border-top: 4px solid #eb6b05; border-radius: 2px 2px 4px 4px; background: #f5f7f6; color: #444; white-space: nowrap; -webkit-text-stroke: 0; box-shadow: 0 1px 2px #35424b; }
.mscroll { width: 17px; background: #f1f1f1; color: #4c4c4c; display: flex; flex-direction: column; align-items: center; padding: 7px 0; }
.mscroll i { width: 13px; height: 216px; margin-top: 69px; background: #c1c1c1; }
.mfoot { margin: 0 40px; border-top: 2px solid #fff; display: flex; gap: 10px; padding-top: 20px; }
.prev, .next { height: 33px; line-height: 31px; text-align: center; border: 1px solid #3199d9; }
.prev { width: 76px; background: #fff; color: #3199d9; margin-left: auto; -webkit-text-stroke: 0; }
.next { width: 51px; background: #3199d9; margin-right: -10px; }
.cursor { position: absolute; left: 729px; top: 136px; }

/* Windows taskbar */
.taskbar { height: 40px; flex: none; background: #1a2b30; color: #fff; display: flex; font-family: "Open Sans", sans-serif; }
.start { width: 48px; display: flex; align-items: center; justify-content: center; }
.search { width: 344px; background: #f1f1f1; border: 1px solid #bdbdbd; color: #333; display: flex; align-items: center; gap: 11px; padding-left: 11px; font-size: 14px; letter-spacing: -.05px; }
.cell { width: 48px; display: flex; align-items: center; justify-content: center; }
.tv { margin-right: 2px; }
.app { width: 49px; display: flex; align-items: center; justify-content: center; }
.open { background: linear-gradient(#76b9ed, #76b9ed) center bottom / 40px 2px no-repeat; }
.open svg { margin-top: 4px; }
.current { width: 48px; margin-left: 1px; background: #4b585b linear-gradient(#76b9ed, #76b9ed) center bottom / 100% 2px no-repeat; }
.tray { margin-left: auto; display: flex; align-items: center; }
.nv { margin-left: 10px; }
.bat { margin-left: 8px; }
.wifi { margin-left: 11px; margin-top: 2px; }
.vol { margin-left: 8px; }
.eng { margin-left: 9px; width: 25px; font-size: 12px; letter-spacing: -.5px; }
.clock { width: 59px; margin-left: 11px; display: flex; flex-direction: column; align-items: center; font-size: 12px; line-height: 18px; letter-spacing: -.5px; white-space: nowrap; }
.notif { position: relative; width: 24px; height: 24px; margin-left: 17px; padding-top: 4px; }
.notif i { position: absolute; left: 7px; top: 10px; width: 17px; height: 17px; border-radius: 50%; border: 1px solid #999; background: #303a3d; font-size: 11px; line-height: 15px; text-align: center; }
.edge { width: 5px; height: 40px; margin-left: 11px; border-left: 1px solid #77858a; }
```
